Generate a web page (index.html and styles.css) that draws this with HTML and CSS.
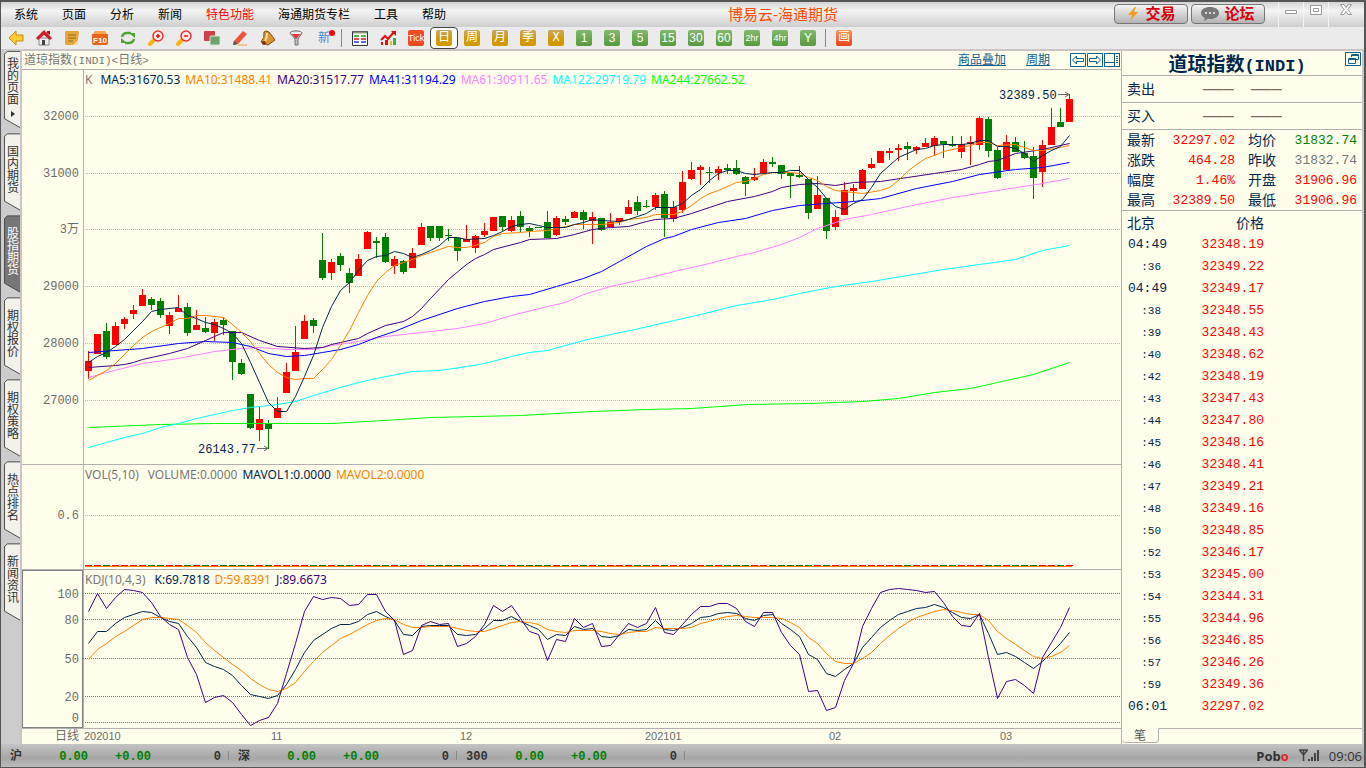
FILE: index.html
```html
<!DOCTYPE html>
<html lang="zh-CN">
<head>
<meta charset="utf-8">
<title>博易云-海通期货</title>
<link rel="stylesheet" href="styles.css">
</head>
<body>
<div class="window">
  <header class="menubar">
    <nav class="menu">
      <button>系统</button><button>页面</button><button>分析</button><button>新闻</button><button class="hot">特色功能</button><button>海通期货专栏</button><button>工具</button><button>帮助</button>
    </nav>
    <h1 class="app-title">博易云-海通期货</h1>
    <div class="actions">
      <button class="action"><svg width="14" height="16" viewBox="0 0 14 16"><path d="M9 1L2 9h4l-2 6 8-9H8l2-5z" fill="#f59a1c"/></svg>交易</button>
      <button class="action"><svg width="18" height="14" viewBox="0 0 18 14"><path d="M9 0c5 0 9 2.300 9 6s-4 6-9 6l-2-.2L3 14l.8-3C1.500 10 0 8.300 0 6c0-3.700 4-6 9-6z" fill="#777"/><path d="M4 5h2v2H4zM8 5h2v2H8zM12 5h2v2h-2z" fill="#ddd"/></svg>论坛</button>
    </div>
    <div class="controls">
      <button aria-label="最小化"><svg width="12" height="12"><path d="M.5 6.500h11v3H.5z" fill="#fff" stroke="#999"/></svg></button>
      <button aria-label="最大化"><svg width="12" height="12"><path d="M.5 1.500h11v9H.5zM3.500 4.500h5v3h-5z" fill="#fff" stroke="#999"/></svg></button>
      <button aria-label="关闭"><svg width="12" height="12"><path d="M.5.5h3.500L6 3.500 8 .5h3.500L8 5.500l3.500 5H8L6 7.500l-2 3H.5L4 5.500z" fill="#fff" stroke="#999"/></svg></button>
    </div>
  </header>

  <div class="toolbar">
    <button class="tool" aria-label="后退"><svg class="ico" viewBox="0 0 16 16"><path d="M1 8l7-7v4h7v6H8v4z" fill="#fc3" stroke="#c98a10"/></svg></button>
    <button class="tool" aria-label="首页"><svg class="ico" viewBox="0 0 16 16"><path d="M3 8h10v7H3z" fill="#eee" stroke="#888"/><path d="M6 10h3v5H6z" fill="#444"/><path d="M0 8l8-8 8 8-2 2-6-5-6 5z" fill="#c8202c"/><path d="M11 1h3v4l-3-2z" fill="#a11"/></svg></button>
    <button class="tool" aria-label="笔记"><svg class="ico" viewBox="0 0 16 16"><path d="M1 2q0-1 1-1h12q1 0 1 1l-2 13H2q-1 0-1-1z" fill="#e3a83c"/><path d="M4 5h8M4 8h8M4 11h5" stroke="#9a6a12"/><path d="M9 15l4-4 1 0-1 4z" fill="#f8dc9c"/></svg></button>
    <button class="tool" aria-label="F10"><svg class="ico" viewBox="0 0 16 16"><path d="M0 4h16v9q0 2-2 2H2q-2 0-2-2z" fill="#e8641e"/><path d="M1 4l2-3h10l2 3z" fill="#f6a54a"/><text x="8" y="13" class="f10">F10</text></svg></button>
    <button class="tool" aria-label="刷新"><svg class="ico" viewBox="0 0 16 16"><path d="M2 7q1-4 5-4h4M14 9q-1 4-5 4H5" fill="none" stroke="#4ea532" stroke-width="2.500"/><path d="M9 3h6v5zM7 13H1V8z" fill="#4ea532"/></svg></button>
    <button class="tool" aria-label="放大"><svg class="ico" viewBox="0 0 16 16"><path d="M6 10l-4 4" stroke="#f5b416" stroke-width="4" stroke-linecap="round"/><circle cx="10" cy="6" r="5" fill="#fde6e6" stroke="#e03535" stroke-width="1.500"/><path d="M8 6h4M10 4v4" stroke="#e01515" stroke-width="1.500"/></svg></button>
    <button class="tool" aria-label="缩小"><svg class="ico" viewBox="0 0 16 16"><path d="M6 10l-4 4" stroke="#f5b416" stroke-width="4" stroke-linecap="round"/><circle cx="10" cy="6" r="5" fill="#fde6e6" stroke="#e03535" stroke-width="1.500"/><path d="M8 6h4" stroke="#e01515" stroke-width="1.500"/></svg></button>
    <button class="tool" aria-label="叠加"><svg class="ico" viewBox="0 0 16 16"><rect width="11" height="10" y="1" rx="1" fill="#cf4048"/><rect x="6" y="6" width="10" height="9" rx="1" fill="#6aa56c" stroke="#d5e5d5"/></svg></button>
    <button class="tool" aria-label="画线"><svg class="ico" viewBox="0 0 16 16"><path d="M2 11L11 1l4 3-9 10-5 1z" fill="#ee5038"/><path d="M2 11l4 3-5 1z" fill="#555"/><path d="M6 15h9" stroke="#f59a3a"/></svg></button>
    <button class="tool" aria-label="预警"><svg class="ico" viewBox="0 0 16 16"><path d="M1 12Q5 8 4 2q2-2 5 0 4 5 6 8l-7 5z" fill="#d99332" stroke="#7c4a12"/><circle cx="4" cy="13" r="2" fill="#7c3010"/><path d="M7 3q0 5-2 8" stroke="#ffe08a" stroke-width="2" fill="none"/></svg></button>
    <button class="tool" aria-label="筛选"><svg class="ico" viewBox="0 0 16 16"><path d="M2 3q6-4 12 0L10 9v6H7V9z" fill="#bbb" stroke="#777"/><ellipse cx="8" cy="3" rx="6" ry="2" fill="#eee" stroke="#777"/><path d="M4 4h8L8 9z" fill="#e33"/></svg></button>
    <button class="tool news">新<i class="dot"></i></button>
    <span class="sep"></span>
    <button class="tool" aria-label="报价"><svg class="ico" viewBox="0 0 16 16"><path d="M.5 1.500h15v14H.5z" fill="#fff" stroke="#334"/><path d="M1 2.500h14" stroke="#8a9a7a" stroke-width="2"/><path d="M2 6h5M9 6h5" stroke="#16a016" stroke-width="1.500"/><path d="M2 9h5M9 9h5" stroke="#e01515" stroke-width="1.500"/><path d="M2 12h5M9 12h5" stroke="#2244bb" stroke-width="1.500"/></svg></button>
    <button class="tool" aria-label="走势"><svg class="ico" viewBox="0 0 16 16"><path d="M1 10l4-4 3 3 6-7" fill="none" stroke="#d11" stroke-width="2"/><path d="M11 1h5v5z" fill="#d11"/><path d="M1 12h2v3H1zM5 10h3v5H5z" fill="#d11"/><path d="M10 11h2v4h-2z" fill="#eb2"/><path d="M13 8h3v7h-3z" fill="#4a4"/></svg></button>
    <button class="tool"><span class="chip tick">Tick</span></button>
    <button class="tool selected"><span class="chip gold">日</span></button>
    <button class="tool"><span class="chip gold">周</span></button>
    <button class="tool"><span class="chip gold">月</span></button>
    <button class="tool"><span class="chip gold">季</span></button>
    <button class="tool"><span class="chip gold">X</span></button>
    <button class="tool"><span class="chip green">1</span></button>
    <button class="tool"><span class="chip green">3</span></button>
    <button class="tool"><span class="chip green">5</span></button>
    <button class="tool"><span class="chip green">15</span></button>
    <button class="tool"><span class="chip green">30</span></button>
    <button class="tool"><span class="chip green">60</span></button>
    <button class="tool"><span class="chip green small">2hr</span></button>
    <button class="tool"><span class="chip green small">4hr</span></button>
    <button class="tool"><span class="chip green">Y</span></button>
    <span class="sep"></span>
    <button class="tool"><span class="chip red">画</span></button>
  </div>

  <div class="workspace">
    <nav class="tabs">
      <button class="tab first"><svg class="tab-shape" viewBox="0 0 17 82"><path d="M17 .5H3.500L.5 3.500V72L17 81.500"/></svg><span>我的页面</span><i class="more"></i></button>
      <button class="tab"><svg class="tab-shape" viewBox="0 0 17 82"><path d="M17 .5H3.500L.5 3.500V72L17 81.500"/></svg><span>国内期货</span></button>
      <button class="tab current"><svg class="tab-shape" viewBox="0 0 17 82"><path d="M17 .5H3.500L.5 3.500V72L17 81.500"/></svg><span>股指期货</span></button>
      <button class="tab"><svg class="tab-shape" viewBox="0 0 17 82"><path d="M17 .5H3.500L.5 3.500V72L17 81.500"/></svg><span>期权报价</span></button>
      <button class="tab"><svg class="tab-shape" viewBox="0 0 17 82"><path d="M17 .5H3.500L.5 3.500V72L17 81.500"/></svg><span>期权策略</span></button>
      <button class="tab"><svg class="tab-shape" viewBox="0 0 17 82"><path d="M17 .5H3.500L.5 3.500V72L17 81.500"/></svg><span>热点排名</span></button>
      <button class="tab"><svg class="tab-shape" viewBox="0 0 17 82"><path d="M17 .5H3.500L.5 3.500V72L17 81.500"/></svg><span>新闻资讯</span></button>
    </nav>

    <main class="content">
      <section class="charts">
        <div class="chart-head">
          <span class="symbol">道琼指数<b>(INDI)&lt;</b>日线<b>&gt;</b></span>
          <a href="#overlay">商品叠加</a>
          <a href="#period">周期</a>
          <div class="nav-icons">
            <button aria-label="上一个"><svg width="16" height="14"><path d="M.5.500h15v13H.5zM2.500 7l4-4v2.500h7v3h-7V11z"/></svg></button>
            <button aria-label="下一个"><svg width="16" height="14"><path d="M.5.500h15v13H.5zM13.500 7l-4-4v2.500h-7v3h7V11z"/></svg></button>
            <button aria-label="布局"><svg width="16" height="14"><path d="M.5 0v14M10.500 0v14M1 9.500h9M15.500 0v14M0 .5h16M0 13.500h16"/><path d="M12 3.500h2M12 5.500h2M12 7.500h2M12 9.500h2"/></svg></button>
          </div>
        </div>

        <div class="pane price">
          <svg class="axis" viewBox="22 70 61 394" preserveAspectRatio="none">
            <text x="79" y="120">32000</text><text x="79" y="177">31000</text><text x="79" y="233">3万</text><text x="79" y="290">29000</text><text x="79" y="347">28000</text><text x="79" y="404">27000</text>
          </svg>
          <div class="plot">
            <svg class="drawing" id="price" viewBox="84 70 1037 394" preserveAspectRatio="none">
              <g class="marks">
                <text x="999" y="99">32389.50</text><path d="M1058 94.500h10M1065 92l4 2.500-4 2.500"/>
                <text x="198" y="453">26143.77</text><path d="M257 448.500h10M264 446l4 2.500-4 2.500"/>
              </g>
            </svg>
            <p class="legend"><span class="c-gray k">K</span><span class="c-navy">MA5:31670.53</span><span class="c-orange">MA10:31488.41</span><span class="c-indigo">MA20:31517.77</span><span class="c-blue">MA41:31194.29</span><span class="c-pink">MA61:30911.65</span><span class="c-cyan">MA122:29719.79</span><span class="c-lime">MA244:27662.52</span></p>
          </div>
        </div>

        <div class="pane volume">
          <svg class="axis" viewBox="22 465 61 104" preserveAspectRatio="none"><text x="79" y="519">0.6</text></svg>
          <div class="plot">
            <svg class="drawing" id="volume" viewBox="84 465 1037 104" preserveAspectRatio="none"></svg>
            <p class="legend"><span class="c-gray name">VOL(5,10)</span><span class="c-gray">VOLUME:0.0000</span><span class="c-navy">MAVOL1:0.0000</span><span class="c-orange">MAVOL2:0.0000</span></p>
          </div>
        </div>

        <div class="pane kdj">
          <svg class="axis boxed" viewBox="22 570 61 158" preserveAspectRatio="none">
            <text x="79" y="598">100</text><text x="79" y="624">80</text><text x="79" y="663">50</text><text x="79" y="701">20</text><text x="79" y="722">0</text>
          </svg>
          <div class="plot">
            <svg class="drawing" id="kdj" viewBox="84 570 1037 158" preserveAspectRatio="none"></svg>
            <p class="legend"><span class="c-gray name">KDJ(10,4,3)</span><span class="c-navy">K:69.7818</span><span class="c-orange">D:59.8391</span><span class="c-indigo">J:89.6673</span></p>
          </div>
        </div>

        <div class="dates">
          <span class="unit">日线</span>
          <svg class="drawing" viewBox="84 729 1037 14" preserveAspectRatio="none">
            <text x="84" y="740">202010</text><text x="271" y="740">11</text><text x="460" y="740">12</text><text x="645" y="740">202101</text><text x="829" y="740">02</text><text x="1000" y="740">03</text>
          </svg>
        </div>
      </section>

      <aside class="quote">
        <div class="quote-head">
          <h2>道琼指数<b>(INDI)</b></h2>
          <button aria-label="还原"><svg width="16" height="14"><path d="M.5.500h15v13H.5zM6.500 5V2.500h7v5H11M7 3.500h6M3.500 6.500h7v5h-7zM4 7.500h6" /></svg></button>
        </div>
        <div class="bid"><span>卖出</span><span class="dash">———</span><span class="dash">———</span></div>
        <div class="bid"><span>买入</span><span class="dash">———</span><span class="dash">———</span></div>
        <dl class="stats">
          <dt>最新</dt><dd class="up">32297.02</dd><dt>均价</dt><dd class="down">31832.74</dd>
          <dt>涨跌</dt><dd class="up">464.28</dd><dt>昨收</dt><dd class="flat">31832.74</dd>
          <dt>幅度</dt><dd class="up">1.46%</dd><dt>开盘</dt><dd class="up">31906.96</dd>
          <dt>最高</dt><dd class="up">32389.50</dd><dt>最低</dt><dd class="up">31906.96</dd>
        </dl>
        <table class="ticks">
          <thead><tr><th>北京</th><th class="right">价格</th><th></th></tr></thead>
          <tbody>
            <tr><td class="full">04:49</td><td>32348.19</td><td></td></tr>
            <tr><td>:36</td><td>32349.22</td><td></td></tr>
            <tr><td class="full">04:49</td><td>32349.17</td><td></td></tr>
            <tr><td>:38</td><td>32348.55</td><td></td></tr>
            <tr><td>:39</td><td>32348.43</td><td></td></tr>
            <tr><td>:40</td><td>32348.62</td><td></td></tr>
            <tr><td>:42</td><td>32348.19</td><td></td></tr>
            <tr><td>:43</td><td>32347.43</td><td></td></tr>
            <tr><td>:44</td><td>32347.80</td><td></td></tr>
            <tr><td>:45</td><td>32348.16</td><td></td></tr>
            <tr><td>:46</td><td>32348.41</td><td></td></tr>
            <tr><td>:47</td><td>32349.21</td><td></td></tr>
            <tr><td>:48</td><td>32349.16</td><td></td></tr>
            <tr><td>:50</td><td>32348.85</td><td></td></tr>
            <tr><td>:52</td><td>32346.17</td><td></td></tr>
            <tr><td>:53</td><td>32345.00</td><td></td></tr>
            <tr><td>:54</td><td>32344.31</td><td></td></tr>
            <tr><td>:55</td><td>32344.96</td><td></td></tr>
            <tr><td>:56</td><td>32346.85</td><td></td></tr>
            <tr><td>:57</td><td>32346.26</td><td></td></tr>
            <tr><td>:59</td><td>32349.36</td><td></td></tr>
            <tr><td class="full">06:01</td><td>32297.02</td><td></td></tr>
          </tbody>
        </table>
        <div class="quote-tabs"><button>笔</button></div>
      </aside>
    </main>
  </div>

  <footer class="status">
    <div class="index"><span>沪</span><b>0.00</b><b>+0.00</b><span class="vol">0</span></div>
    <div class="index"><span>深</span><b>0.00</b><b>+0.00</b><span class="vol">0</span></div>
    <div class="index"><span>300</span><b>0.00</b><b>+0.00</b><span class="vol">0</span></div>
    <div class="tray">
      <strong>Pob<em>o</em></strong>
      <svg width="22" height="14"><path d="M1 1h9M5.500 1v11M1.500 1l4 5 4-5" fill="none" stroke="#444" stroke-width="1.500"/><path d="M10 10h2v2h-2zM13 8h2v4h-2zM16 4h2v8h-2zM19 1h2v11h-2z" fill="#444"/></svg>
      <time>09:06</time>
    </div>
  </footer>
</div>
<script src="chart.js"></script>
</body>
</html>
```
FILE: styles.css
```css
* { box-sizing: border-box; }

body {
  margin: 0;
  font: 12px/14px "Liberation Sans", "Noto Sans CJK SC", sans-serif;
  color: #000;
}

button {
  margin: 0;
  padding: 0;
  border: 0;
  background: none;
  font: inherit;
  color: inherit;
}

svg { display: block; }

h1, h2, p, dl, dd { margin: 0; font-weight: normal; }

.window {
  display: flex;
  flex-direction: column;
  min-height: 100vh;
  border: solid #555;
  border-width: 2px 2px 2px 1px;
  background: #ccc;
}

/* menu bar */
.menubar {
  display: flex;
  height: 25px;
  padding-right: 2px;
  background: linear-gradient(#d4d4d4, #f4f4f4 35%, #cecece);
}

.menu { display: flex; gap: 24px; padding-left: 13px; }
.menu .hot { color: #f00; }

.app-title {
  flex: 1;
  padding-left: 6px;
  text-align: center;
  font-size: 15px;
  line-height: 25px;
  color: #ff4a00;
}

.actions { display: flex; gap: 3px; padding: 2px 13px 3px 0; }

.action {
  display: flex;
  align-items: center;
  justify-content: center;
  gap: 5px;
  width: 74px;
  border: 1px solid #777;
  border-radius: 4px;
  background: linear-gradient(#f4f4f4, #b4b4b4);
  font-size: 15px;
  font-weight: bold;
  color: #d8000c;
}

.controls { display: flex; }
.controls button {
  display: flex;
  justify-content: center;
  width: 25px;
  padding-top: 2px;
  border-left: 1px solid #f4f4f4;
}
.controls button:last-child { width: 34px; }

/* toolbar */
.toolbar { display: flex; height: 22px; padding-left: 1px; background: #ebebeb; }

.tool {
  position: relative;
  display: flex;
  align-items: center;
  justify-content: center;
  width: 28px;
}
.tool.selected { border: 1px solid #444; border-radius: 4px; background: #fff; }

.ico { width: 16px; height: 16px; }
.f10 { font: bold 8px "Liberation Sans", sans-serif; fill: #fff; text-anchor: middle; }

.news { font-size: 12px; color: #3a8ee0; }
.dot {
  position: absolute;
  top: 3px;
  right: 3px;
  width: 6px;
  height: 6px;
  border-radius: 50%;
  background: #f00;
}

.chip {
  width: 16px;
  height: 16px;
  border-radius: 2px;
  font: 12px/16px "Liberation Mono", "Noto Sans CJK SC", monospace;
  color: #fff;
  text-align: center;
  white-space: nowrap;
}
.chip.tick { background: #f04d24; font: 9px/16px "Liberation Sans", sans-serif; }
.chip.gold { background: linear-gradient(#c9a860, #d09a00 60%); }
.chip.green { background: linear-gradient(#83b96d, #559a3d); font-family: "Liberation Sans", sans-serif; }
.chip.small { font-size: 9px; }
.chip.red { background: linear-gradient(#f79a58, #e8431a); }

.sep { width: 1px; margin: 2px 4px 2px 3px; background: #888; }

/* side tabs */
.workspace { display: flex; flex: 1; }

.tabs {
  display: flex;
  flex-direction: column;
  width: 19px;
  margin-top: -1px;
  padding-left: 3px;
}

.tab {
  position: relative;
  display: flex;
  flex-direction: column;
  align-items: center;
  width: 16px;
  height: 82px;
  padding: 15px 0 0 2px;
  text-align: center;
  line-height: 12px;
  color: #333;
}
.tab:not(.first) { margin-top: 0; }
.tab span { position: relative; width: 12px; word-break: break-all; }
.tab.first { height: 83px; padding-top: 10px; }
.tab-shape { position: absolute; inset: 0; width: 100%; height: 100%; }
.tab-shape path { fill: #f2f1ea; stroke: #444; }
.tab.current .tab-shape path { fill: #767676; }
.tab.current { color: #fff; }
.more {
  position: relative;
  margin-top: 5px;
  border-left: 4px solid #333;
  border-top: 3px solid transparent;
  border-bottom: 3px solid transparent;
}

.content {
  display: flex;
  flex: 1;
  border: solid #cdc5c5;
  border-width: 2px 2px 0 2px;
  background: #ffffec;
}

/* charts */
.charts { display: flex; flex: 1; flex-direction: column; min-width: 0; border-right: 1px solid #b5b0b0; }

.chart-head {
  display: flex;
  gap: 20px;
  height: 19px;
  padding: 2px 1px 0 2px;
  border-bottom: 1px solid #b5b0b0;
}
.symbol { flex: 1; color: #777; }
.symbol b { font: 11px/14px "Liberation Mono", monospace; }
.chart-head a { color: #10608c; }
.nav-icons { display: flex; gap: 1px; }
.nav-icons svg, .quote-head svg { fill: none; stroke: #10608c; }
.nav-icons button, .quote-head button { height: 14px; }

.pane { display: flex; border-bottom: 1px solid #b5b0b0; }
.price { flex: 395; }
.volume { flex: 105; }
.kdj { flex: 159; }

.axis {
  flex: none;
  width: 61px;
  height: 100%;
  font: 12px "Liberation Mono", "Noto Sans CJK SC", monospace;
  fill: #6c6c6c;
  text-anchor: end;
}
.boxed { outline: 1px solid #808080; outline-offset: -1px; }

.plot { position: relative; flex: 1; min-width: 0; border-left: 1px solid #b5b0b0; }
.plot .drawing { position: absolute; inset: 0; width: 100%; height: 100%; }

.legend {
  position: relative;
  display: flex;
  gap: 5px;
  padding: 2px 0 0 1px;
  font: 12px/16px "Noto Sans", sans-serif;
}
.legend .k { padding-right: 3px; }
.legend .name { padding-right: 4px; }

.c-gray { color: #777; }
.c-navy { color: #00264d; stroke: #00264d; }
.c-orange { color: #ff8000; stroke: #ff8000; }
.c-indigo { color: #400080; stroke: #400080; }
.c-blue { color: #00f; stroke: #00f; }
.c-pink { color: #ff80ff; stroke: #ff80ff; }
.c-cyan { color: #0ff; stroke: #0ff; }
.c-lime { color: #0f0; stroke: #0f0; }

.line { fill: none; stroke-width: 1; }
.grid { stroke: #b8b8b8; stroke-dasharray: 1 1; shape-rendering: crispEdges; }
.kdj .grid { stroke: #777; }
.rise { stroke: #f00; shape-rendering: crispEdges; }
.fall { stroke: #008000; shape-rendering: crispEdges; }
.body { stroke-width: 7; }

.marks text { font: 12px "Liberation Mono", monospace; fill: #00264d; }
.marks path { fill: none; stroke: #666; }

.dates { display: flex; height: 15px; }
.unit { width: 57px; text-align: right; color: #6c6c6c; }
.dates .drawing { flex: 1; height: 14px; margin-left: 5px; font: 11px "Liberation Sans", sans-serif; fill: #6c6c6c; }

/* quote panel */
.quote { display: flex; flex-direction: column; width: 240px; color: #00264d; }

.quote-head {
  display: flex;
  height: 25px;
  padding: 1px;
  border-bottom: 1px solid #b5b0b0;
}
.quote-head h2 {
  flex: 1;
  padding-left: 6px;
  text-align: center;
  font: bold 19px/21px "Noto Sans CJK SC", sans-serif;
}
.quote-head b { font: bold 17px/21px "Liberation Mono", monospace; }

.bid {
  display: flex;
  gap: 16px;
  height: 27px;
  padding-left: 5px;
  border-bottom: 1px solid #b5b0b0;
  font-size: 14px;
  line-height: 26px;
}
.bid span:first-child { width: 60px; }
.dash { width: 32px; color: #806a5f; font: 17px/28px "Liberation Mono", monospace; white-space: nowrap; }

.stats {
  display: grid;
  grid-template-columns: 28px 80px 42px 1fr;
  grid-auto-rows: 20px;
  padding: 0 5px;
  border-bottom: 1px solid #b5b0b0;
  font-size: 14px;
  line-height: 20px;
}
.stats dt:nth-of-type(even) { padding-left: 13px; white-space: nowrap; }
.stats dd { text-align: right; font: 13px/22px "Liberation Mono", monospace; }

.up { color: #f00; }
.down { color: #008000; }
.flat { color: #777; }

.ticks { width: 100%; margin-top: 1px; border-collapse: collapse; table-layout: fixed; }
.ticks th, .ticks td { height: 22px; padding: 0; }
.ticks th { padding-left: 5px; font-weight: normal; font-size: 14px; text-align: left; }
.ticks th:first-child { width: 45px; }
.ticks th:nth-child(2) { width: 97px; }
.ticks th.right { text-align: right; }
.ticks td {
  text-align: right;
  color: #f00;
  font: 13px/22px "Liberation Mono", monospace;
}
.ticks td:first-child { padding-right: 6px; color: #00264d; font-size: 11px; white-space: nowrap; }
.ticks td.full:first-child { padding-right: 0; font-size: 13px; }

.quote-tabs { margin-top: auto; height: 16px; border-top: 1px solid #b5b0b0; }
.quote-tabs button {
  width: 37px;
  height: 15px;
  margin-top: -1px;
  border: 1px solid #b5b0b0;
  border-top-color: #ffffec;
  border-left: 0;
  border-radius: 0 0 4px 4px;
  color: #555;
}

/* status bar */
.status {
  display: flex;
  height: 23px;
  background: linear-gradient(#c4c4c4, #a6a6a6 60%, #bcbcbc);
  font-weight: bold;
  line-height: 26px;
  color: #333;
}
.index {
  display: grid;
  grid-template-columns: 24px 54px 63px 70px;
  width: 228px;
  height: 23px;
  padding-left: 9px;
  font-family: "Liberation Mono", "Noto Sans CJK SC", monospace;
  background: linear-gradient(#888, #888) right center / 1px 9px no-repeat;
}
.index b { color: #008000; text-align: right; }
.index .vol { text-align: right; }

.tray { display: flex; align-items: center; gap: 9px; margin-left: auto; padding-right: 2px; }
.tray strong { font: bold 13px "Open Sans", sans-serif; }
.tray em { font-style: normal; color: #e22; }
.tray time { font: 13px "Open Sans", sans-serif; }
```
FILE: chart.js
```javascript
// Each candle: direction, high, body top, body bottom, low (plot units, 9 per day).
const candles = `
R 351 361 371 379;R 334 334 354 354;G 323 331 357 359;R 322 326 345 345;R 317 319 324 329;
R 305 310 314 319;R 289 295 306 306;G 297 299 305 310;G 298 301 315 318;R 312 315 326 334;
R 295 308 312 312;G 303 307 333 336;R 310 325 330 330;G 317 328 332 333;R 319 322 333 341;
G 318 320 325 335;G 331 331 362 380;G 359 363 374 375;G 394 394 428 429;R 406 419 430 441;
G 420 424 429 449;R 397 408 418 418;R 363 372 393 393;R 326 352 371 371;R 315 321 339 339;
G 318 320 326 333;G 233 260 278 280;R 259 262 273 280;G 253 256 265 271;G 268 273 283 293;
R 254 259 276 276;R 231 232 249 249;G 237 241 243 258;G 233 237 262 263;R 256 259 266 274;
G 260 261 272 274;R 248 253 268 268;R 223 227 245 245;G 226 226 238 241;G 226 226 238 241;
G 229 235 236 241;G 238 238 251 261;R 225 239 242 242;R 235 236 248 253;R 223 231 235 237;
R 217 217 231 231;G 216 216 227 232;R 216 220 231 232;G 211 216 227 232;G 226 228 231 237;
G 227 227 228 228;G 211 222 238 238;R 216 218 235 236;G 216 219 222 225;R 211 212 218 218;
G 210 212 220 229;R 212 217 221 244;G 218 218 230 231;R 213 222 227 227;R 218 218 222 225;
R 200 207 214 214;G 196 202 211 215;G 200 206 207 208;R 193 195 207 210;G 191 194 218 237;
R 201 207 219 222;R 171 182 210 213;R 162 170 179 180;R 165 167 170 185;G 167 172 173 183;
R 166 169 173 180;G 164 168 170 174;G 160 168 174 175;G 176 177 184 196;R 168 177 180 181;
R 159 162 173 173;G 157 162 164 167;G 165 165 174 179;G 173 173 176 198;G 166 175 177 178;
G 179 179 213 219;R 176 195 209 209;G 198 198 231 239;R 210 217 227 230;R 182 190 215 215;
R 184 188 191 201;R 169 170 189 189;R 158 164 168 169;R 151 151 163 163;R 148 151 153 160;
R 144 148 150 161;G 142 146 149 160;R 146 147 150 154;R 138 143 147 147;R 136 138 146 156;
G 141 141 144 158;G 136 144 146 147;R 136 144 152 158;R 136 142 144 165;R 116 118 145 150;
G 117 119 151 157;G 147 150 178 179;R 135 142 170 170;G 137 142 152 152;G 141 153 158 159;
G 147 156 178 199;R 140 145 172 187;R 108 127 145 145;G 108 122 127 127;R 94 99 122 122`
  .split(';').map(row => row.trim().split(' '));

const averages = {
  lime: '88,427 160,424 214,423 331,423 400,419 430,417 520,415 592,411 646,409 691,408 748,404 808,403 862,401 898,398 934,392 970,388 997,382 1033,374 1069,362',
  cyan: '88,447 106,442 124,437 142,433 160,427 178,423 196,418 214,414 232,410 250,407 277,404 295,401 313,395 340,387 358,382 376,378 412,371 439,370 466,366 484,363 511,356 529,352 547,350 565,345 583,340 610,334 630,330 700,314 736,305 772,299 799,293 835,286 871,281 907,275 943,269 979,264 1015,259 1042,250 1069,245',
  pink: '88,377 106,372 142,363 178,358 214,351 241,348 259,347 286,349 313,349 331,345 358,341 385,336 430,331 457,328 484,323 511,315 547,306 565,302 583,294 610,286 628,282 646,278 682,269 709,263 736,256 754,252 781,244 799,237 817,228 844,219 871,214 907,206 952,197 997,190 1042,183 1069,178',
  blue: '88,352 115,350 142,348 178,343 205,341 232,342 250,346 268,353 286,356 304,355 322,352 340,349 358,344 376,337 394,331 421,320 457,308 484,301 511,296 529,294 556,286 583,278 601,271 619,261 646,246 664,238 673,236 691,229 718,222 745,218 772,210 799,205 826,203 853,201 880,198 916,188 952,181 979,174 1015,169 1042,167 1069,162',
  indigo: '88,367 115,365 124,364 133,362 142,359 169,353 187,348 205,340 223,332 241,332 259,340 277,346 304,348 322,347 331,344 340,342 358,338 367,333 385,325 403,321 412,316 421,308 430,298 448,279 466,264 475,258 484,254 493,249 520,242 529,239 556,238 574,234 592,229 610,227 628,226 646,221 655,219 673,218 691,213 709,207 727,201 754,196 772,191 781,187 799,184 817,183 835,185 853,182 880,181 907,177 934,173 961,169 979,164 988,161 997,160 1015,153 1042,149 1069,143',
  orange: '88,380 97,375 106,370 115,363 124,354 133,345 142,337 151,331 169,323 178,318 187,318 196,315 205,315 223,317 232,324 241,332 250,341 259,353 268,364 277,372 286,377 295,379 304,378 313,378 322,369 331,359 340,345 349,330 358,312 367,295 376,281 385,272 394,265 403,262 412,259 421,255 430,252 439,249 448,246 457,247 466,247 475,245 484,242 493,236 502,233 520,232 529,231 547,230 556,228 574,224 601,224 619,222 628,219 646,217 655,214 673,214 682,211 691,205 700,198 709,193 718,190 736,182 745,181 754,178 763,174 772,172 790,172 799,173 808,177 817,180 826,186 835,190 853,192 862,193 880,190 889,187 898,180 907,171 916,164 925,158 934,155 943,151 961,147 970,145 979,142 988,142 997,145 1015,144 1033,150 1042,150 1060,147 1069,145',
  navy: '88,362 97,356 106,352 115,346 124,339 133,330 142,321 151,311 160,309 178,307 187,315 196,318 205,322 214,324 223,328 232,333 241,343 250,362 259,382 268,402 277,411 286,411 295,396 304,376 313,355 322,327 331,306 340,290 349,282 358,270 367,260 376,256 385,255 394,251 403,253 412,257 421,254 430,250 439,245 448,237 457,237 466,239 484,238 493,235 502,231 511,226 520,224 529,223 538,225 547,227 565,227 574,224 583,222 592,219 601,220 619,221 628,219 637,216 646,213 655,207 673,207 682,203 691,195 700,189 709,180 718,173 727,170 736,170 745,173 754,174 763,173 772,172 781,172 790,170 799,170 808,179 817,187 826,198 835,206 844,209 853,203 862,199 871,187 880,173 889,165 898,157 907,153 916,149 925,148 934,145 943,144 961,144 970,143 979,140 988,140 997,146 1006,146 1015,148 1024,153 1033,161 1042,155 1051,150 1060,146 1069,135'
};

const kLine = '643 631 631 623 617 614 611 612 617 621 623 636 647 662 666 669 675 685 694 696 698 695 684 669 652 640 634 628 624 624 621 614 611 616 620 634 635 626 625 625 625 634 635 634 628 620 620 616 621 625 629 639 634 635 626 629 628 636 637 635 629 630 629 620 629 630 627 623 617 616 613 612 613 618 620 615 614 623 629 636 654 659 673 676 669 663 647 637 627 620 614 611 608 607 604 607 612 617 618 614 633 654 652 656 662 668 661 652 643 632';
const dLine = '659 649 643 636 631 625 619 617 617 618 619 625 632 642 650 657 664 670 678 684 689 691 688 682 671 661 652 645 638 634 629 624 620 618 619 624 627 627 626 626 626 628 630 631 631 628 625 622 621 622 624 629 631 632 630 630 630 631 633 634 632 631 631 627 628 628 628 627 623 621 618 616 615 616 617 617 617 618 622 627 637 643 653 661 663 663 658 652 643 635 628 622 617 614 611 609 610 612 614 614 620 631 638 644 650 656 658 656 652 645';
const jLine = '611 593 608 597 589 590 592 602 616 624 629 657 674 702 697 695 702 714 725 720 717 703 673 643 611 596 599 597 598 605 604 594 594 611 620 654 650 625 621 624 623 646 643 636 624 605 611 605 618 631 634 660 639 641 618 627 623 646 645 634 623 627 623 607 632 634 624 614 606 606 603 603 608 621 626 612 612 632 645 654 691 690 710 707 680 663 626 608 592 589 588 589 590 592 591 602 616 625 626 613 657 698 681 679 685 693 657 642 627 607';

const dayX = i => 88.5 + i * 9;

function draw(id, tag, className, attrs) {
  const node = document.createElementNS('http://www.w3.org/2000/svg', tag);
  node.setAttribute('class', className);
  for (const name in attrs) node.setAttribute(name, attrs[name]);
  document.getElementById(id).append(node);
}

function gridLines(id, levels) {
  levels.forEach(y => draw(id, 'path', 'grid', { d: `M85 ${y + 0.5}H1121` }));
}

function daily(values) {
  return values.split(' ').map((y, i) => `${dayX(i)},${+y + 0.5}`).join(' ');
}

gridLines('price', [116, 173, 229, 286, 343, 400]);
gridLines('volume', [515]);
gridLines('kdj', [593, 619, 658, 696, 722]);

candles.forEach(([dir, high, top, bottom, low], i) => {
  const tone = dir === 'R' ? 'rise' : 'fall';
  const x = dayX(i);
  draw('price', 'path', tone, { d: `M${x} ${high}V${low}` });
  draw('price', 'path', tone + ' body', { d: `M${x} ${top}V${bottom}` });
  draw('volume', 'path', tone, { d: `M${x - 3.5} 565.5h7` });
});

for (const tone in averages) {
  draw('price', 'polyline', 'line c-' + tone, { points: averages[tone], transform: 'translate(0.5 0.5)' });
}

draw('volume', 'path', 'line c-orange', { d: 'M85 566.5H1072' });
draw('kdj', 'polyline', 'line c-navy', { points: daily(kLine) });
draw('kdj', 'polyline', 'line c-orange', { points: daily(dLine) });
draw('kdj', 'polyline', 'line c-indigo', { points: daily(jLine) });
```
